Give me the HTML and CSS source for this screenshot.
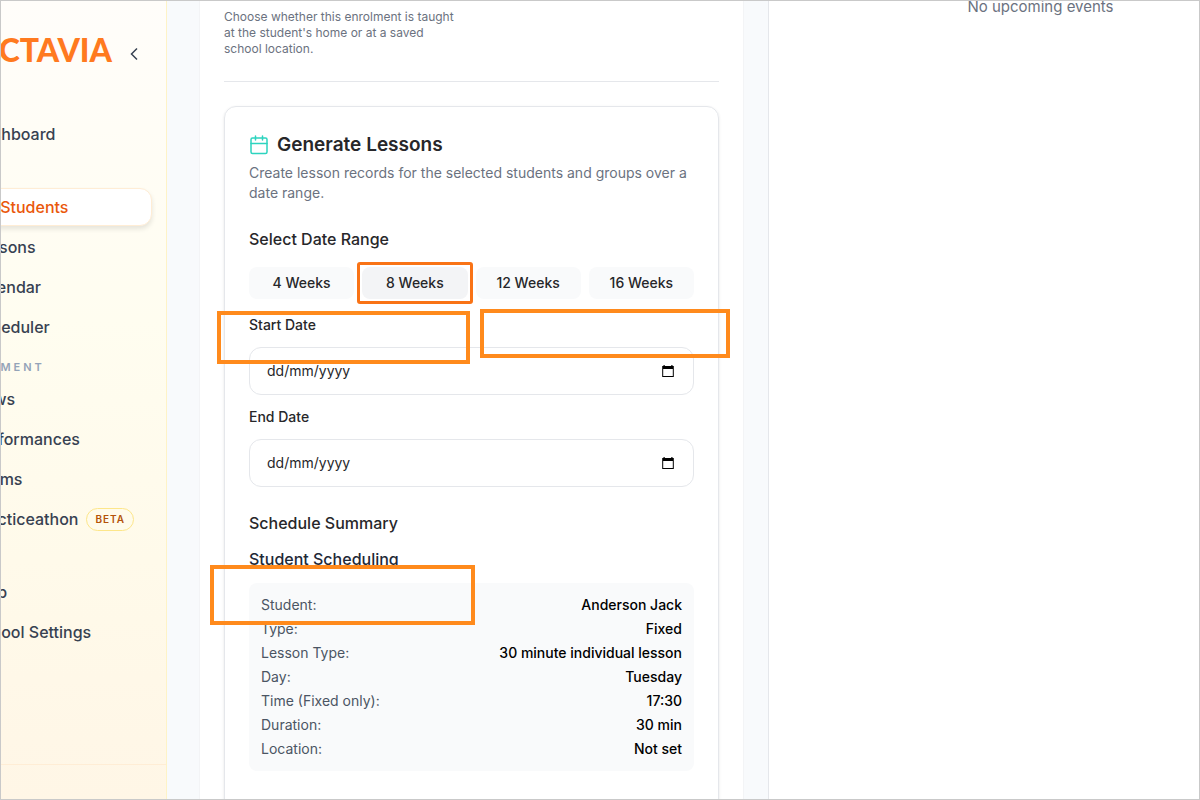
FILE: index.html
```html
<!DOCTYPE html>
<html lang="en-GB">
<head>
    <meta charset="UTF-8">
    <meta name="viewport" content="width=device-width, initial-scale=1.0">
    <title>Octavia - My Students</title>
    <link rel="stylesheet" href="styles.css">
</head>
<body>
    <div class="app">
        <aside class="sidebar">
            <div class="sidebar-head">
                <a class="logo" href="#">OCTAVIA</a>
                <button class="collapse" type="button" aria-label="Collapse sidebar">
                    <svg width="16" height="16" viewBox="0 0 16 16" fill="none" stroke="currentColor" stroke-width="1.5"><path d="M11 2.5 5.5 8l5.5 5.5"/></svg>
                </button>
            </div>
            <nav class="nav">
                <div class="nav-group">
                    <a class="nav-item" href="#">Dashboard</a>
                </div>
                <div class="nav-group nav-group-spaced">
                    <a class="nav-item active" href="#">My Students</a>
                    <a class="nav-item" href="#">Lessons</a>
                    <a class="nav-item" href="#">Calendar</a>
                    <a class="nav-item" href="#">Scheduler</a>
                </div>
                <h2 class="nav-title">Engagement</h2>
                <div class="nav-group">
                    <a class="nav-item" href="#">News</a>
                    <a class="nav-item" href="#">Performances</a>
                    <a class="nav-item" href="#">Exams</a>
                    <a class="nav-item" href="#">Practiceathon <span class="badge">BETA</span></a>
                </div>
                <div class="nav-group nav-group-spaced">
                    <a class="nav-item" href="#">Help</a>
                    <a class="nav-item" href="#">School Settings</a>
                </div>
            </nav>
            <div class="sidebar-foot"></div>
        </aside>

        <main class="main">
            <div class="panel">
                <p class="hint">Choose whether this enrolment is taught at the student's home or at a saved school location.</p>

                <form class="card">
                    <h2 class="card-title">
                        <svg width="20" height="20" viewBox="0 0 20 20" fill="none" stroke="currentColor" stroke-width="1.5" stroke-linecap="round"><rect x="2" y="3" width="16" height="15.5" rx="1.5"/><path d="M2 8.5h16M6.5 1v4M13.5 1v4"/></svg>
                        Generate Lessons
                    </h2>
                    <p class="card-text">Create lesson records for the selected students and groups over a date range.</p>

                    <h3 class="section-title">Select Date Range</h3>
                    <div class="weeks">
                        <button type="button">4 Weeks</button>
                        <button type="button" class="selected">8 Weeks</button>
                        <button type="button">12 Weeks</button>
                        <button type="button">16 Weeks</button>
                    </div>

                    <div class="form-group">
                        <label for="startDate">Start Date</label>
                        <div class="date-field">
                            <input type="text" id="startDate" name="startDate" placeholder="dd/mm/yyyy">
                            <button type="button" aria-label="Pick start date">
                                <svg width="14" height="14" viewBox="0 0 14 14"><path fill="currentColor" d="M2.5 1h1.2v1h6.6V1h1.2v1h1.3v11H1.2V2h1.3zM2.2 5v7h9.6V5z"/></svg>
                            </button>
                        </div>
                    </div>
                    <div class="form-group">
                        <label for="endDate">End Date</label>
                        <div class="date-field">
                            <input type="text" id="endDate" name="endDate" placeholder="dd/mm/yyyy">
                            <button type="button" aria-label="Pick end date">
                                <svg width="14" height="14" viewBox="0 0 14 14"><path fill="currentColor" d="M2.5 1h1.2v1h6.6V1h1.2v1h1.3v11H1.2V2h1.3zM2.2 5v7h9.6V5z"/></svg>
                            </button>
                        </div>
                    </div>

                    <h3 class="section-title">Schedule Summary</h3>
                    <h4 class="sub-title">Student Scheduling</h4>
                    <dl class="summary">
                        <div><dt>Student:</dt><dd>Anderson Jack</dd></div>
                        <div><dt>Type:</dt><dd>Fixed</dd></div>
                        <div><dt>Lesson Type:</dt><dd>30 minute individual lesson</dd></div>
                        <div><dt>Day:</dt><dd>Tuesday</dd></div>
                        <div><dt>Time (Fixed only):</dt><dd>17:30</dd></div>
                        <div><dt>Duration:</dt><dd>30 min</dd></div>
                        <div><dt>Location:</dt><dd>Not set</dd></div>
                    </dl>
                </form>
            </div>
        </main>

        <aside class="events">
            <p>No upcoming events</p>
        </aside>

        <!-- highlight boxes drawn over the page -->
        <div class="marker marker-start"></div>
        <div class="marker marker-end"></div>
        <div class="marker marker-student"></div>
    </div>
</body>
</html>
```
FILE: styles.css
```css
* {
    box-sizing: border-box;
    margin: 0;
    padding: 0;
}

body {
    font-family: Inter, "Liberation Sans", sans-serif;
    font-size: 14px;
    line-height: 20px;
    color: #27272a;
    background-color: #f8fafc;
}

button,
input {
    font: inherit;
    color: inherit;
}

a {
    text-decoration: none;
}

.app {
    position: relative;
    display: flex;
    height: 100vh;
    border: 1px solid #c9c9c9;
    overflow: hidden;
}

/* Sidebar, partly scrolled off to the left */
.sidebar {
    display: flex;
    flex-direction: column;
    flex: 0 0 240px;
    margin-left: -74px;
    border-right: 1px solid #fef3c7;
    background: linear-gradient(#fffdfa, #fffdf0 40%, #fffaea 70%, #fff6e6);
}

.sidebar-head {
    display: flex;
    align-items: center;
    justify-content: flex-end;
    gap: 14px;
    height: 98px;
    padding-right: 24px;
}

.logo {
    font-family: Lato, sans-serif;
    font-size: 32px;
    line-height: 40px;
    font-weight: 900;
    color: #ff7a1f;
}

.collapse {
    display: flex;
    padding-top: 8px;
    border: none;
    background: none;
    color: #374151;
    cursor: pointer;
}

.nav {
    padding: 16px 14px 0 32px;
}

.nav-group {
    display: flex;
    flex-direction: column;
    gap: 2px;
}

.nav-group-spaced {
    margin-top: 35px;
}

.nav-item {
    display: flex;
    align-items: center;
    gap: 8px;
    height: 38px;
    padding: 0 12px;
    border: 1px solid transparent;
    border-radius: 12px;
    font-size: 16px;
    font-weight: 500;
    color: #374151;
    white-space: nowrap;
}

.nav-item.active {
    background-color: #fff;
    border-color: #ffedd5;
    color: #ea580c;
    box-shadow: 0 3px 5px rgba(0, 0, 0, 0.1);
}

.nav-title {
    margin: 13px 0 5px -22px;
    font-size: 11px;
    line-height: 16px;
    font-weight: 600;
    letter-spacing: 3px;
    text-transform: uppercase;
    color: #94a3b8;
}

.badge {
    padding: 2px 8px;
    border: 1px solid #fde68a;
    border-radius: 12px;
    background-color: #fffbeb;
    font-size: 10px;
    line-height: 17px;
    font-weight: 600;
    letter-spacing: 1px;
    color: #b45309;
}

.sidebar-foot {
    height: 35px;
    margin-top: auto;
    border-top: 1px solid #ffedd5;
}

/* Main column */
.main {
    flex: 1;
    padding: 0 24px 0 32px;
}

.panel {
    height: 100%;
    padding: 8px 24px 0;
    border: 1px solid #f3f4f6;
    border-width: 0 1px;
    background-color: #fff;
    overflow: hidden;
}

.hint {
    padding: 0 256px 24px 0;
    border-bottom: 1px solid #e5e7eb;
    font-size: 12px;
    line-height: 16px;
    color: #6b7280;
}

.card {
    margin-top: 24px;
    padding: 24px 24px 48px;
    border: 1px solid #e5e7eb;
    border-radius: 12px;
    box-shadow: 0 1px 3px rgba(0, 0, 0, 0.1);
}

.card-title {
    display: flex;
    align-items: center;
    gap: 8px;
    font-size: 19px;
    line-height: 28px;
    font-weight: 600;
}

.card-title svg {
    color: #2dd4bf;
}

.card-text {
    margin-top: 4px;
    color: #6b7280;
}

.section-title {
    margin-top: 24px;
    font-size: 16px;
    line-height: 24px;
    font-weight: 500;
}

.sub-title {
    margin-top: 12px;
    font-size: 16px;
    line-height: 24px;
    font-weight: 500;
    color: #1f2937;
}

.weeks {
    display: grid;
    grid-template-columns: repeat(4, 1fr);
    gap: 8px;
    margin: 16px 0;
}

.weeks button {
    position: relative;
    height: 32px;
    border: none;
    border-radius: 8px;
    background-color: #f9fafb;
    font-weight: 500;
    cursor: pointer;
}

.weeks .selected {
    background-color: #f3f4f6;
}

.weeks .selected::after {
    content: "";
    position: absolute;
    inset: -5px;
    border: 3px solid #f97316;
    border-radius: 3px;
}

.form-group {
    margin-bottom: 12px;
}

label {
    display: block;
    margin-bottom: 12px;
    font-weight: 500;
}

.date-field {
    display: flex;
    align-items: center;
    height: 48px;
    padding: 0 18px 0 17px;
    border: 1px solid #e5e7eb;
    border-radius: 12px;
}

.date-field input {
    flex: 1;
    border: none;
    outline: none;
    background: none;
}

.date-field input::placeholder {
    color: #27272a;
}

.date-field button {
    display: flex;
    border: none;
    background: none;
    color: #000;
    cursor: pointer;
}

.summary {
    display: grid;
    gap: 4px;
    margin-top: 12px;
    padding: 12px;
    border-radius: 8px;
    background-color: #f9fafb;
}

.summary div {
    display: flex;
    justify-content: space-between;
}

.summary dt {
    color: #4b5563;
}

.summary dd {
    font-weight: 500;
    color: #000;
}

/* Events column, runs past the right edge */
.events {
    flex: 0 0 544px;
    margin-right: -113px;
    border-left: 1px solid #e5e7eb;
    background-color: #fff;
    font-size: 15px;
    line-height: 24px;
    text-align: center;
    color: #6b7280;
}

.events p {
    margin-top: -6px;
}

.marker {
    position: absolute;
    border: 4px solid #ff8a1c;
    pointer-events: none;
}

.marker-start {
    left: 216px;
    top: 310px;
    width: 253px;
    height: 53px;
}

.marker-end {
    left: 479px;
    top: 308px;
    width: 250px;
    height: 49px;
}

.marker-student {
    left: 209px;
    top: 564px;
    width: 265px;
    height: 60px;
}
```
